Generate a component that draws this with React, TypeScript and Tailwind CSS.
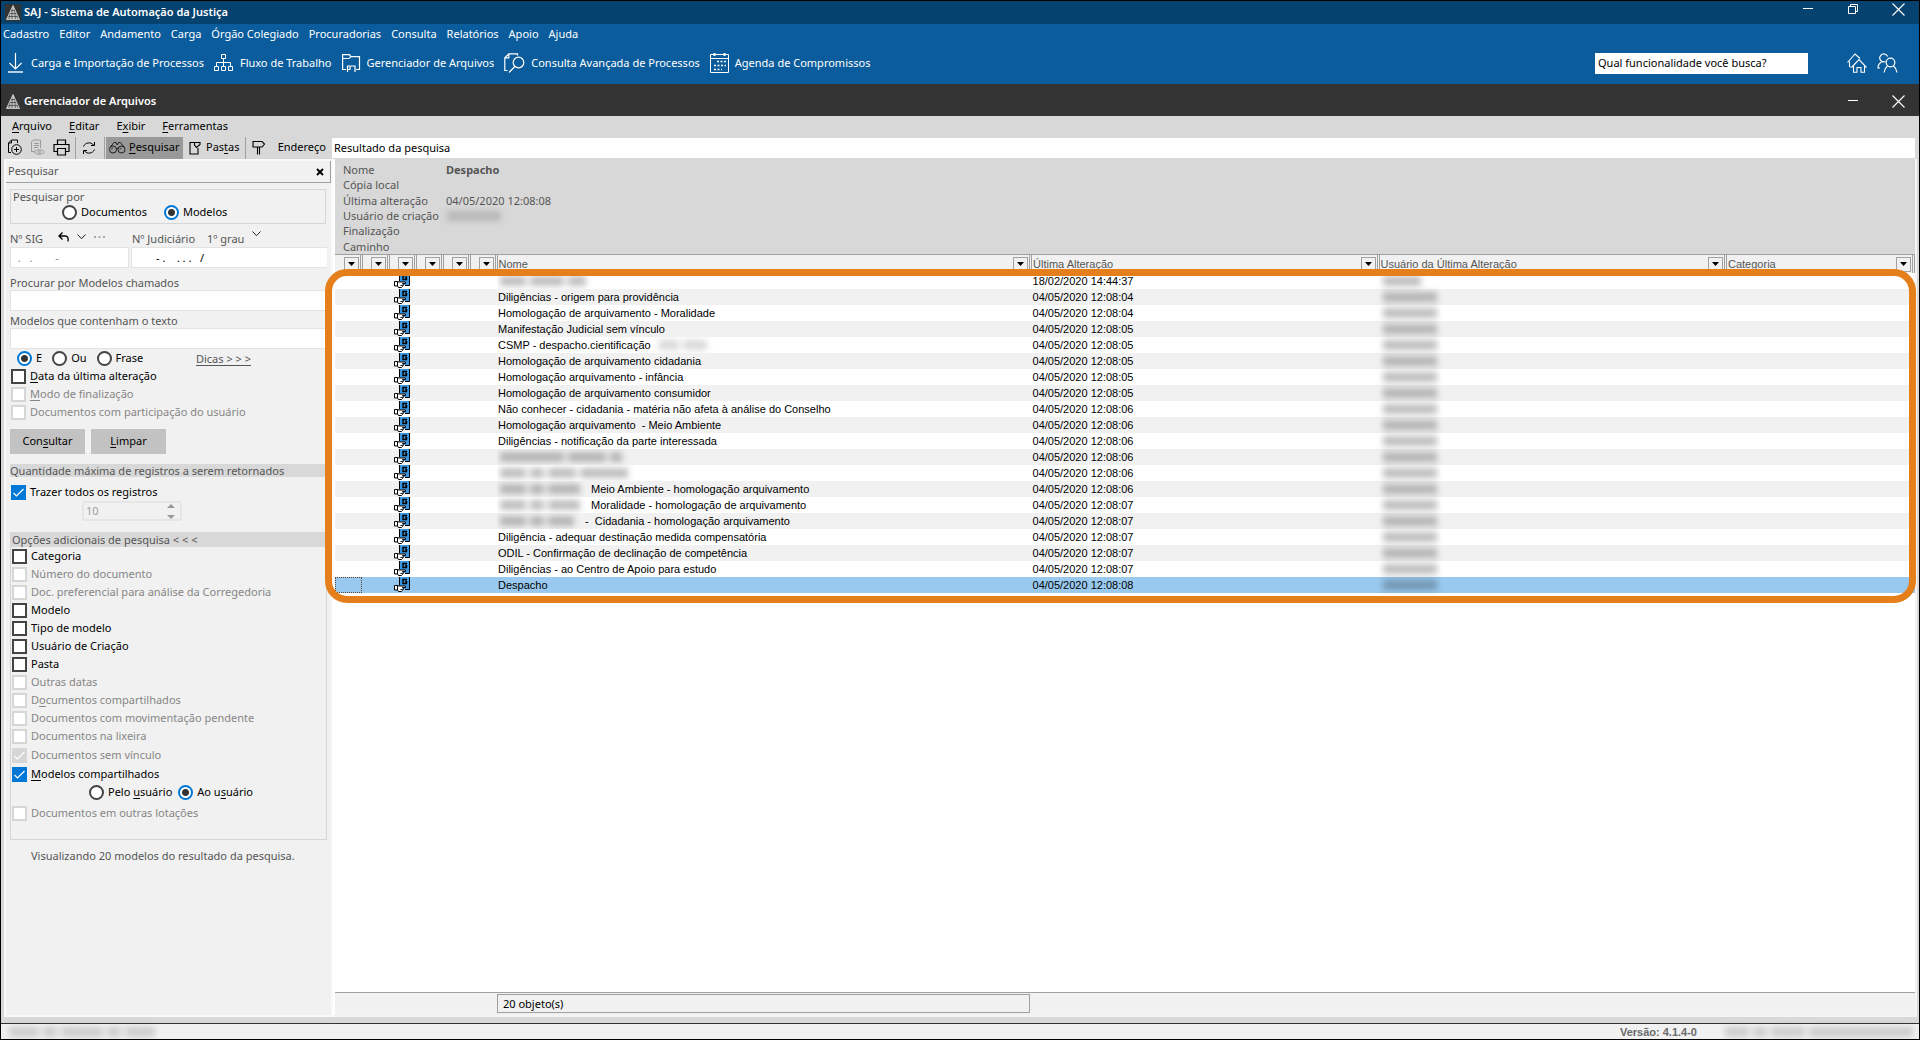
import React, { useState } from "react";

const SANS = "font-['Noto_Sans','Open_Sans',sans-serif]";

/* ---------- icons ---------- */

function Logo({ boxed = false }: { boxed?: boolean }) {
  return (
    <svg width="16" height="17" viewBox="0 0 16 17" fill="none">
      {boxed && <path d="M0 0 H16 V17 H0 Z" fill="#333" />}
      <path d="M8 1.500 L14.500 15.500 H1.500 Z" fill="#c4c4c4" />
      <path d="M5.500 6.500 H10.500 M4.500 9.500 H12 M2.500 12.500 H14" stroke="#444" strokeWidth=".8" />
      <path d="M7 4.500 V15.500 M9.500 4.500 L10.500 15.500 M4.500 9.500 L4 15.500 M12 9.500 L13 15.500" stroke="#444" strokeWidth=".7" />
      <path d="M8 1.500 L14.500 15.500 H1.500 Z" stroke="#d6d6d6" strokeWidth=".8" />
    </svg>
  );
}

function DownloadIcon() {
  return (
    <svg width="18" height="20" viewBox="0 0 18 20" fill="none" stroke="#fff" strokeWidth="1.2">
      <path d="M8.500 0 V16 M2.500 10 L8.500 16 L14.500 10" />
      <path d="M1 19 H16" strokeWidth="1.400" />
    </svg>
  );
}

function FlowIcon() {
  return (
    <svg width="20" height="18" viewBox="0 0 20 18" fill="none" stroke="#fff">
      <path d="M7.500 .5 h4 v4 h-4 z M.5 12.500 h4 v4 h-4 z M7.500 12.500 h4 v4 h-4 z M14.500 12.500 h4 v4 h-4 z M9.500 4.500 V12 M2.500 12 V8.500 H16.500 V12" />
    </svg>
  );
}

function FolderIcon() {
  return (
    <svg width="19" height="19" viewBox="0 0 19 19" fill="none" stroke="#fff" strokeWidth="1.200">
      <path d="M4 15.500 H.6 V.6 H7.500 L9 2.600 H17.500 V15.500 H14" />
      <path d="M.6 4.500 H7 L9 2.600" />
      <path d="M5.500 18 V12 H13 V18 M5.500 15.500 H8 V12" />
    </svg>
  );
}

function DocSearchIcon() {
  return (
    <svg width="21" height="20" viewBox="0 0 21 20" fill="none" stroke="#fff" strokeWidth="1.200">
      <path d="M3.500 17.500 H.8 V4.800 L4.800 .8 H13.500 V2.500 M4.800 .8 V4.800 H.8" />
      <circle cx="14.500" cy="9.500" r="5.300" />
      <path d="M10.800 13.500 L5 19.500" />
    </svg>
  );
}

function CalendarIcon() {
  return (
    <svg width="19" height="20" viewBox="0 0 19 20" fill="none" stroke="#fff">
      <path d="M.5 1.500 H18.500 V19.500 H.5 Z M.5 5.500 H18.500" />
      <path d="M4.500 0 V3 M14.500 0 V3" strokeWidth="2" />
      <path d="M7 8.500 H16 M4 12.500 H16 M4 16.500 H12" strokeWidth="1.600" strokeDasharray="2 1.500" />
    </svg>
  );
}

function HomeIcon() {
  return (
    <svg width="20" height="20" viewBox="0 0 20 20" fill="none" stroke="#fff" strokeWidth="1.100">
      <path d="M2.500 14 V8.500 M.5 9.500 L8 1 L13 5.500 M3 14 H4" />
      <path d="M4.500 14.500 L12 6.500 L19.500 14.500 M6.500 13 V19.300 H10 V14.500 H14 V19.300 H17.500 V13" />
    </svg>
  );
}

function PeopleIcon() {
  return (
    <svg width="22" height="20" viewBox="0 0 22 20" fill="none" stroke="#fff" strokeWidth="1.200">
      <path d="M8.500 8.500 A4 4 0 1 1 10.500 3.500 M5 8.500 C2.500 10 1 12 1 15 H3" />
      <circle cx="13.500" cy="9.500" r="4.300" />
      <path d="M10.500 13 C8.500 14.500 7.500 16.500 7 19.500 M16.500 13 C18.500 14.500 19.500 16.500 20 19.500" />
    </svg>
  );
}

function NewDocIcon() {
  return (
    <svg width="16" height="17" viewBox="0 0 16 17" fill="none" stroke="#000">
      <path d="M4 13.500 H1.500 V4 L4.500 1 H10.500 V4 M4.500 1 V4 H1.500" />
      <circle cx="9.500" cy="10.500" r="4.800" />
      <path d="M9.500 8 V13 M7 10.500 H12" />
    </svg>
  );
}

function ViewDocIcon() {
  return (
    <svg width="16" height="17" viewBox="0 0 16 17" fill="none" stroke="#9a9a9a">
      <path d="M4 12.500 H1.500 V3 L3.500 1 H10.500 V9 M4 4.500 H9 M4 6.500 H9 M4 8.500 H8" />
      <path d="M4 13 C6.500 10 12 10 14.500 13 C12 16 6.500 16 4 13 Z" />
      <circle cx="9.300" cy="13" r="1.200" />
    </svg>
  );
}

function PrintIcon() {
  return (
    <svg width="17" height="17" viewBox="0 0 17 17" fill="none" stroke="#000" strokeWidth="1.200">
      <path d="M4.500 5.500 V1 H12.500 V5.500 M4 12.500 H1 V5.500 H16 V12.500 H13 M4.500 9.500 H12.500 V16 H4.500 Z" />
    </svg>
  );
}

function RefreshIcon() {
  return (
    <svg width="14" height="14" viewBox="0 0 14 14" fill="none" stroke="#000">
      <path d="M1.500 5.500 C3 1.500 9 .5 11.500 4 M12.500 1 V4.500 H9" />
      <path d="M12.500 8.500 C11 12.500 5 13.500 2.500 10 M1.500 13 V9.500 H5" />
    </svg>
  );
}

function BinocularsIcon() {
  return (
    <svg width="17" height="13" viewBox="0 0 17 13" fill="none" stroke="#111" strokeWidth=".9">
      <circle cx="4" cy="8.500" r="3.500" />
      <circle cx="12.500" cy="8.500" r="3.500" />
      <path d="M7.500 8 C7.500 7 9 7 9 8 M1.500 6 L5 1.500 H7 L8.300 4 L9.500 1.500 H11.500 L15 6" />
      <path d="M2.500 8.500 A1.500 1.500 0 0 1 4 7 M11 8.500 A1.500 1.500 0 0 1 12.500 7" strokeWidth=".7" />
    </svg>
  );
}

function NoteIcon() {
  return (
    <svg width="12" height="14" viewBox="0 0 12 14" fill="none" stroke="#000" strokeWidth="1.100">
      <path d="M5 1.500 H1 V13 H9 V7 M5.500 1.500 V4 L7.500 6.500 L11 3.500 V1.500 H5" />
    </svg>
  );
}

function SignIcon() {
  return (
    <svg width="14" height="15" viewBox="0 0 14 15" fill="none" stroke="#000" strokeWidth="1.100">
      <path d="M1 1.500 H10 L12.500 4 L10 7 H1 Z M5.500 7 V14.500 M7.500 7 V14.500" />
    </svg>
  );
}

function Chevron() {
  return (
    <svg width="9" height="6" viewBox="0 0 9 6" fill="none" stroke="#222">
      <path d="M.5 .5 L4.500 4.700 L8.500 .5" />
    </svg>
  );
}

function ModelIcon() {
  return (
    <svg className="shrink-0" width="16" height="16" viewBox="0 0 16 16" fill="none">
      <path d="M5 0 H15 V12 H5 Z" fill="#3b97e0" />
      <path d="M15.500 0 V12.500 H11 M5.500 0 V8" stroke="#000" />
      <path d="M13 2.500 H9 V6.500 H12.500 V4.500 H11" stroke="#000" strokeWidth="1.400" />
      <path d="M.5 8.500 H3.500 L5 9 H11.500 V10.500 H8.500 L9.500 12 L8.500 13.500 L7.500 14.500 H4.500 L3.500 13 H.5 Z" fill="#fff" stroke="#000" />
      <path d="M3.500 8.500 V13 M6.500 12.500 H8.500" stroke="#000" />
    </svg>
  );
}

function MinimizeIcon() {
  return (
    <svg width="12" height="12" viewBox="0 0 12 12" stroke="#fff">
      <path d="M1 5.500 H11" />
    </svg>
  );
}

function RestoreIcon() {
  return (
    <svg width="12" height="12" viewBox="0 0 12 12" fill="none" stroke="#fff">
      <path d="M1.500 3.500 h7 v7 h-7 z M3.500 3.500 V1.500 H10.500 V8.500 H8.500" />
    </svg>
  );
}

function CloseIcon() {
  return (
    <svg width="13" height="13" viewBox="0 0 13 13" stroke="#fff" strokeWidth="1.100">
      <path d="M.5 .5 L12.500 12.500 M12.500 .5 L.5 12.500" />
    </svg>
  );
}

/* ---------- form parts ---------- */

function Mnemonic({ text }: { text: string }) {
  const at = text.indexOf("&");
  if (at < 0) return <>{text}</>;
  return (
    <>
      {text.slice(0, at)}
      <span className="underline underline-offset-2">{text[at + 1]}</span>
      {text.slice(at + 2)}
    </>
  );
}

function Radio({ name, label, checked = false }: { name: string; label: string; checked?: boolean }) {
  return (
    <label className="flex h-4 items-center gap-1 whitespace-pre text-black">
      <input
        type="radio"
        name={name}
        defaultChecked={checked}
        className="size-[15px] shrink-0 appearance-none rounded-full border-2 border-[#444] bg-white checked:border-[#0078d7] checked:bg-[radial-gradient(circle,#333_0_3px,#fff_4px)]"
      />
      <span>
        <Mnemonic text={label} />
      </span>
    </label>
  );
}

function Check({ label, checked = false, disabled = false }: { label: string; checked?: boolean; disabled?: boolean }) {
  const box = disabled
    ? "border-[#d6d6d6] checked:bg-[#d6d6d6]"
    : "border-[#444] checked:border-[#0078d7] checked:bg-[#0078d7]";
  return (
    <label className={`flex h-[18px] items-center gap-1 whitespace-nowrap ${disabled ? "text-[#868686]" : "text-black"}`}>
      <span className="relative flex size-[15px] shrink-0">
        <input
          type="checkbox"
          defaultChecked={checked}
          disabled={disabled}
          className={`peer size-[15px] appearance-none border-2 bg-white ${box}`}
        />
        <svg className="pointer-events-none absolute inset-0 hidden peer-checked:block" width="15" height="15" viewBox="0 0 15 15" fill="none" stroke="#fff" strokeWidth="1.200">
          <path d="M2.500 8 L5.500 11 L12.500 4" />
        </svg>
      </span>
      <span>
        <Mnemonic text={label} />
      </span>
    </label>
  );
}

/* Redacted value: soft grey word shapes */
function Redacted({ words, faint = false }: { words: string[]; faint?: boolean }) {
  return (
    <span aria-hidden="true" className="inline-flex h-3 items-center gap-1 align-middle blur-[3px]">
      {words.map((w, i) => (
        <span key={i} className={`h-[10px] ${w} ${faint ? "bg-black/15" : "bg-black/25"}`} />
      ))}
    </span>
  );
}

/* ---------- data ---------- */

const menus = ["Cadastro", "Editor", "Andamento", "Carga", "Órgão Colegiado", "Procuradorias", "Consulta", "Relatórios", "Apoio", "Ajuda"];

const shortcuts = [
  { icon: <DownloadIcon />, label: "Carga e Importação de Processos" },
  { icon: <FlowIcon />, label: "Fluxo de Trabalho" },
  { icon: <FolderIcon />, label: "Gerenciador de Arquivos" },
  { icon: <DocSearchIcon />, label: "Consulta Avançada de Processos" },
  { icon: <CalendarIcon />, label: "Agenda de Compromissos" },
];

type Row = { name: string; hidden?: string[]; time: string };

const rows: Row[] = [
  { name: "", hidden: ["w-[26px]", "w-[34px]", "w-[18px]"], time: "18/02/2020 14:44:37" },
  { name: "Diligências - origem para providência", time: "04/05/2020 12:08:04" },
  { name: "Homologação de arquivamento - Moralidade", time: "04/05/2020 12:08:04" },
  { name: "Manifestação Judicial sem vínculo", time: "04/05/2020 12:08:05" },
  { name: "CSMP - despacho.cientificação", time: "04/05/2020 12:08:05" },
  { name: "Homologação de arquivamento cidadania", time: "04/05/2020 12:08:05" },
  { name: "Homologação arquivamento - infância", time: "04/05/2020 12:08:05" },
  { name: "Homologação de arquivamento consumidor", time: "04/05/2020 12:08:05" },
  { name: "Não conhecer - cidadania - matéria não afeta à análise do Conselho", time: "04/05/2020 12:08:06" },
  { name: "Homologação arquivamento  - Meio Ambiente", time: "04/05/2020 12:08:06" },
  { name: "Diligências - notificação da parte interessada", time: "04/05/2020 12:08:06" },
  { name: "", hidden: ["w-[64px]", "w-[38px]", "w-[12px]"], time: "04/05/2020 12:08:06" },
  { name: "", hidden: ["w-[26px]", "w-[14px]", "w-[28px]", "w-[48px]"], time: "04/05/2020 12:08:06" },
  { name: "Meio Ambiente - homologação arquivamento", hidden: ["w-[26px]", "w-[14px]", "w-[32px]"], time: "04/05/2020 12:08:06" },
  { name: "Moralidade - homologação de arquivamento", hidden: ["w-[26px]", "w-[14px]", "w-[32px]"], time: "04/05/2020 12:08:07" },
  { name: "-  Cidadania - homologação arquivamento", hidden: ["w-[26px]", "w-[14px]", "w-[26px]"], time: "04/05/2020 12:08:07" },
  { name: "Diligência - adequar destinação medida compensatória", time: "04/05/2020 12:08:07" },
  { name: "ODIL - Confirmação de declinação de competência", time: "04/05/2020 12:08:07" },
  { name: "Diligências - ao Centro de Apoio para estudo", time: "04/05/2020 12:08:07" },
  { name: "Despacho", time: "04/05/2020 12:08:08" },
];

/* ---------- regions ---------- */

function AppHeader() {
  return (
    <header className="bg-[#0b5c9c] text-white">
      <div className="flex h-[23px] items-center bg-[#06426f] pl-[4px] pr-[14px]">
        <Logo boxed />
        <h1 className="ml-[3px] flex-1 text-[11px] font-semibold">SAJ - Sistema de Automação da Justiça</h1>
        <div className="flex h-full items-start gap-[33px] pt-[2px]">
          <button aria-label="Minimizar"><MinimizeIcon /></button>
          <button aria-label="Restaurar"><RestoreIcon /></button>
          <button aria-label="Fechar"><CloseIcon /></button>
        </div>
      </div>
      <nav className="flex h-5 items-center gap-[10px] pl-[2px]">
        {menus.map((m) => (
          <button key={m} className="text-[11px]">{m}</button>
        ))}
      </nav>
      <div className="flex h-10 items-center pb-[2px] pl-[6px] pr-[20px]">
        <div className="flex flex-1 items-center gap-[10px]">
          {shortcuts.map((s) => (
            <button key={s.label} className="flex items-center gap-[6px] whitespace-nowrap text-[11px]">
              {s.icon}
              {s.label}
            </button>
          ))}
        </div>
        <input
          aria-label="Qual funcionalidade você busca?"
          defaultValue="Qual funcionalidade você busca?"
          className="mr-[39px] h-[21px] w-[213px] bg-white px-[3px] pb-px text-[11px] text-black"
        />
        <div className="flex gap-[10px]">
          <button aria-label="Início"><HomeIcon /></button>
          <button aria-label="Usuários"><PeopleIcon /></button>
        </div>
      </div>
    </header>
  );
}

function Toolbar() {
  return (
    <div className="flex h-[22px] items-center pb-px pr-[4px] text-black">
      <div className="flex w-[331px] shrink-0 items-center">
        <div className="flex items-center gap-[7px] pl-[6px] pr-[5px]">
          <button aria-label="Novo"><NewDocIcon /></button>
          <button aria-label="Visualizar" disabled><ViewDocIcon /></button>
          <button aria-label="Imprimir"><PrintIcon /></button>
        </div>
        <div className="flex h-[22px] items-center border-x border-[#a0a0a0] pl-[6px] pr-[8px]">
          <button aria-label="Atualizar"><RefreshIcon /></button>
        </div>
        <button className="ml-[1px] flex h-[22px] w-[77px] items-center gap-[3px] bg-[#999] pl-[3px]">
          <BinocularsIcon />
          <span><Mnemonic text="&Pesquisar" /></span>
        </button>
        <button className="flex h-[22px] w-[63px] items-center gap-[5px] border-r border-[#a0a0a0] pl-[6px]">
          <NoteIcon />
          <span><Mnemonic text="Pas&tas" /></span>
        </button>
        <span className="pl-[6px]"><SignIcon /></span>
        <label htmlFor="address" className="flex-1 pr-[6px] text-right">Endereço</label>
      </div>
      <input id="address" defaultValue="Resultado da pesquisa" className="h-5 min-w-0 flex-1 bg-white px-[2px]" />
    </div>
  );
}

function SearchPanel() {
  const field = "block w-full border border-[#e3e3e3] bg-white px-1";
  return (
    <aside className="flex w-[329px] shrink-0 flex-col border-2 border-[#fafafa] bg-[#f1f1f1] text-[#555]">
      <div className="flex h-[22px] shrink-0 items-center justify-between border-b border-r border-[#a0a0a0] pl-[2px] pr-[6px]">
        <h2>Pesquisar</h2>
        <button aria-label="Fechar painel">
          <svg width="8" height="8" viewBox="0 0 8 8" stroke="#000" strokeWidth="1.800">
            <path d="M1 1 L7 7 M7 1 L1 7" />
          </svg>
        </button>
      </div>
      <div className="pl-[4px] pr-[4px]">
        <fieldset className="mr-px mt-[6px] h-[35px] border border-[#d6d6d6] pl-[2px]">
          <div className="h-[14px] leading-[14px]">Pesquisar por</div>
          <div className="flex gap-[17px] pl-[49px]">
            <Radio name="kind" label="Documentos" />
            <Radio name="kind" label="Modelos" checked />
          </div>
        </fieldset>

        <div className="mt-[7px] grid grid-cols-[119px_1fr] gap-x-[2px]">
          <div className="flex h-4 items-end">
            <label htmlFor="sig" className="w-[48px] leading-4">Nº SIG</label>
            <div className="flex h-4 items-center gap-2 pb-1">
              <button aria-label="Desfazer">
                <svg width="11" height="10" viewBox="0 0 11 10" fill="none" stroke="#000" strokeWidth="1.300">
                  <path d="M4.500 .5 L1 4 L4.500 7.500 M1 4 H7 C10 4 10.500 6 10 9.500" />
                </svg>
              </button>
              <button aria-label="Histórico"><Chevron /></button>
              <button aria-label="Mais">
                <svg width="11" height="4" viewBox="0 0 11 4" fill="#aaa">
                  <path d="M0 1 h2 v2 h-2z M4.500 1 h2 v2 h-2z M9 1 h2 v2 h-2z" />
                </svg>
              </button>
            </div>
          </div>
          <div className="flex h-4 items-end pl-px">
            <label htmlFor="jud" className="w-[75px] leading-4">Nº Judiciário</label>
            <button className="flex items-start gap-[8px] leading-4">1º grau<Chevron /></button>
          </div>
          <input id="sig" defaultValue=" .   .        -" className="h-[21px] w-full whitespace-pre border border-[#e3e3e3] bg-white px-1 text-[#888]" />
          <input id="jud" defaultValue="       - .    . . .   /" className="h-[21px] w-full whitespace-pre border border-r-0 border-[#e3e3e3] bg-white px-1 text-black" />
        </div>

        <label htmlFor="names" className="mt-2 block leading-[14px]">Procurar por Modelos chamados</label>
        <input id="names" className={`h-[21px] ${field}`} />
        <label htmlFor="text" className="mt-[3px] block leading-[14px]">Modelos que contenham o texto</label>
        <input id="text" className={`h-[21px] ${field}`} />

        <div className="mt-px flex items-center pl-[7px]">
          <div className="flex flex-1 gap-[10px]">
            <Radio name="mode" label="E" checked />
            <Radio name="mode" label="Ou" />
            <Radio name="mode" label="Frase" />
          </div>
          <a href="#dicas" className="mr-[76px] pt-[2px] leading-[14px] underline underline-offset-2">Dicas &gt; &gt; &gt;</a>
        </div>
        <div className="pl-px pt-px">
          <Check label="&Data da última alteração" />
          <Check label="&Modo de finalização" disabled />
          <Check label="Documentos com participação do usuário" disabled />
        </div>

        <div className="mt-2 flex gap-[6px] text-black">
          <button className="h-[25px] w-[75px] bg-[#c2c2c2]"><Mnemonic text="Con&sultar" /></button>
          <button className="h-[25px] w-[75px] bg-[#c2c2c2]"><Mnemonic text="&Limpar" /></button>
        </div>

        <h3 className="mt-[10px] h-[13px] bg-[#d8d8d8] leading-[13px]">Quantidade máxima de registros a serem retornados</h3>
        <div className="mt-[6px] pl-px"><Check label="Trazer todos os registros" checked /></div>
        <div className="ml-[72px] flex h-5 w-[100px] items-center justify-between border-2 border-[#e6e6e6] pl-[2px] pr-[5px] text-[#a0a0a0]">
          <input aria-label="Quantidade" defaultValue="10" disabled className="w-12" />
          <svg width="8" height="15" viewBox="0 0 8 15" fill="#999">
            <path d="M4 0 L8 4 H0 Z M4 15 L0 11 H8 Z" />
          </svg>
        </div>

        <section className="mt-[11px] h-[308px] border border-[#d6d6d6] pl-px">
          <h3 className="-ml-px h-[14px] bg-[#d8d8d8] pl-px leading-[14px]">Opções adicionais de pesquisa &lt; &lt; &lt;</h3>
          <Check label="Categoria" />
          <Check label="Número do documento" disabled />
          <Check label="Doc. preferencial para análise da Corregedoria" disabled />
          <Check label="Modelo" />
          <Check label="Tipo de modelo" />
          <Check label="Usuário de Criação" />
          <Check label="Pasta" />
          <Check label="Outras datas" disabled />
          <Check label="D&ocumentos compartilhados" disabled />
          <Check label="Documentos com movimentação pendente" disabled />
          <Check label="Documentos na lixeira" disabled />
          <div className="mt-px"><Check label="Documentos sem vínculo" checked disabled /></div>
          <div className="mt-px"><Check label="&Modelos compartilhados" checked /></div>
          <div className="mt-px flex gap-[6px] pl-[77px]">
            <Radio name="share" label="Pelo &usuário" />
            <Radio name="share" label="Ao u&suário" checked />
          </div>
          <div className="mt-1"><Check label="Documentos em outras lotações" disabled /></div>
        </section>
        <p className="ml-[21px] mt-2 leading-4">Visualizando 20 modelos do resultado da pesquisa.</p>
      </div>
    </aside>
  );
}

function FilterButton({ label }: { label: string }) {
  return (
    <button aria-label={label} className="flex h-[15px] w-[15px] shrink-0 items-center justify-center border border-[#a0a0a0] bg-[#f1f1f1]">
      <svg width="7" height="4" viewBox="0 0 7 4"><path d="M0 0 H7 L3.500 4 Z" fill="#000" /></svg>
    </button>
  );
}

function HeaderCell({ label, name }: { label?: string; name: string }) {
  return (
    <th scope="col" className="h-[18px] overflow-hidden border-r border-[#a0a0a0] bg-[#f1f1f1] p-0 font-normal">
      <div className="mr-[1px] flex h-[18px] items-center justify-between border-r border-[#a0a0a0] pl-[1px] pr-[1px]">
        <span>{label}</span>
        <FilterButton label={`Filtrar ${name}`} />
      </div>
    </th>
  );
}

function Results() {
  const [selected, setSelected] = useState(rows.length - 1);
  return (
    <div className="relative border-t border-[#a0a0a0]">
      <table className="w-full table-fixed border-collapse text-left font-['Liberation_Sans',sans-serif] text-[11px] text-black">
        <colgroup>
          {[0, 1, 2, 3, 4, 5].map((i) => (
            <col key={i} className="w-[27px]" />
          ))}
          <col />
          <col className="w-[22%]" />
          <col className="w-[22%]" />
          <col className="w-[188px]" />
        </colgroup>
        <thead className="text-[#555]">
          <tr>
            {[1, 2, 3, 4, 5, 6].map((i) => (
              <HeaderCell key={i} name={`coluna ${i}`} />
            ))}
            <HeaderCell label="Nome" name="Nome" />
            <HeaderCell label="Última Alteração" name="Última Alteração" />
            <HeaderCell label="Usuário da Última Alteração" name="Usuário" />
            <HeaderCell label="Categoria" name="Categoria" />
          </tr>
        </thead>
        <tbody>
          {rows.map((r, i) => {
            const active = i === selected;
            return (
              <tr
                key={i}
                onClick={() => setSelected(i)}
                className={active ? "h-4 bg-[#99c9ef]" : i % 2 ? "h-4 bg-[#f1f1f1]" : "h-4 bg-white"}
              >
                <td className={active ? "h-4 p-0 outline-1 -outline-offset-1 outline-dotted outline-[#5a4632]" : "h-4 p-0"} />
                <td className="p-0" />
                <td className="h-4 p-0"><div className="flex h-4 pl-[5px]"><ModelIcon /></div></td>
                <td className="p-0" />
                <td className="p-0" />
                <td className="p-0" />
                <td className="h-4 p-0">
                  <div className="flex h-4 items-center gap-1 overflow-hidden whitespace-pre pl-px">
                    {r.hidden && <span className="flex pl-[2px] pr-[7px]"><Redacted words={r.hidden} /></span>}
                    <span>{r.name}</span>
                    {r.name.startsWith("CSMP") && <span className="flex pl-1"><Redacted faint words={["w-[20px]", "w-[24px]"]} /></span>}
                  </div>
                </td>
                <td className="h-4 p-0"><div className="h-4 whitespace-nowrap pl-px leading-4">{r.time}</div></td>
                <td className="h-4 p-0"><div className="flex h-4 items-center pl-[4px]"><Redacted words={[i === 0 ? "w-[38px]" : "w-[54px]"]} /></div></td>
                <td className="p-0" />
              </tr>
            );
          })}
        </tbody>
      </table>
      <div className="pointer-events-none absolute -bottom-[10px] -left-[10px] -right-[1px] top-[14px] rounded-[22px] border-[7px] border-[#e47f1c]" />
    </div>
  );
}

function InfoHeader() {
  return (
    <dl className="grid h-[95px] shrink-0 grid-cols-[103px_1fr] content-stretch bg-[#d8d8d8] pl-[8px] pt-[3px] leading-[15px] text-[#555]">
      <dt>Nome</dt><dd className="font-bold">Despacho</dd>
      <dt>Cópia local</dt><dd />
      <dt>Última alteração</dt><dd>04/05/2020 12:08:08</dd>
      <dt>Usuário de criação</dt><dd className="flex items-center pl-px"><Redacted words={["w-[54px]"]} faint /></dd>
      <dt>Finalização</dt><dd />
      <dt>Caminho</dt><dd />
    </dl>
  );
}

export default function App() {
  return (
    <div className={`flex min-h-screen flex-col border border-black bg-[#d8d8d8] text-[11px] ${SANS}`}>
      <AppHeader />
      <div className="flex h-8 items-center bg-[#333] pl-[4px] pr-[14px] pt-[2px] text-white">
        <Logo />
        <h2 className="ml-[3px] flex-1 font-semibold">Gerenciador de Arquivos</h2>
        <div className="flex items-center gap-[33px]">
          <button aria-label="Minimizar janela"><MinimizeIcon /></button>
          <button aria-label="Fechar janela"><CloseIcon /></button>
        </div>
      </div>
      <nav className="flex h-[21px] items-center gap-[17px] pl-[11px] text-black">
        {["&Arquivo", "&Editar", "E&xibir", "&Ferramentas"].map((m) => (
          <button key={m}><Mnemonic text={m} /></button>
        ))}
      </nav>
      <Toolbar />
      <div className="flex flex-1 pb-[6px] pl-[3px] pr-[2px]">
        <SearchPanel />
        <main className="flex min-w-0 flex-1 flex-col border-b-2 border-r-2 border-[#f4f4f4] bg-white pl-[2px]">
          <InfoHeader />
          <Results />
          <div className="flex-1" />
          <footer className="flex h-[23px] items-start border-t border-[#a0a0a0] bg-[#f1f1f1] pt-px text-black">
            <div className="ml-[162px] h-[19px] w-[calc(33%+12px)] border border-[#a0a0a0] px-[5px] leading-[17px]">20 objeto(s)</div>
          </footer>
        </main>
      </div>
      <div className="flex h-4 items-center border-t border-[#333] bg-[#f1f1f1] pl-2 pr-[6px]">
        <div className="flex-1"><div className="flex"><Redacted words={["w-[30px]", "w-[14px]", "w-[42px]", "w-[14px]", "w-[30px]"]} faint /></div></div>
        <span className="mr-7 font-['Liberation_Sans',sans-serif] text-[11px] font-bold leading-3 text-[#6a6a6a]">Versão: 4.1.4-0</span>
        <Redacted words={["w-[24px]", "w-[14px]", "w-[34px]", "w-[104px]"]} faint />
      </div>
    </div>
  );
}
